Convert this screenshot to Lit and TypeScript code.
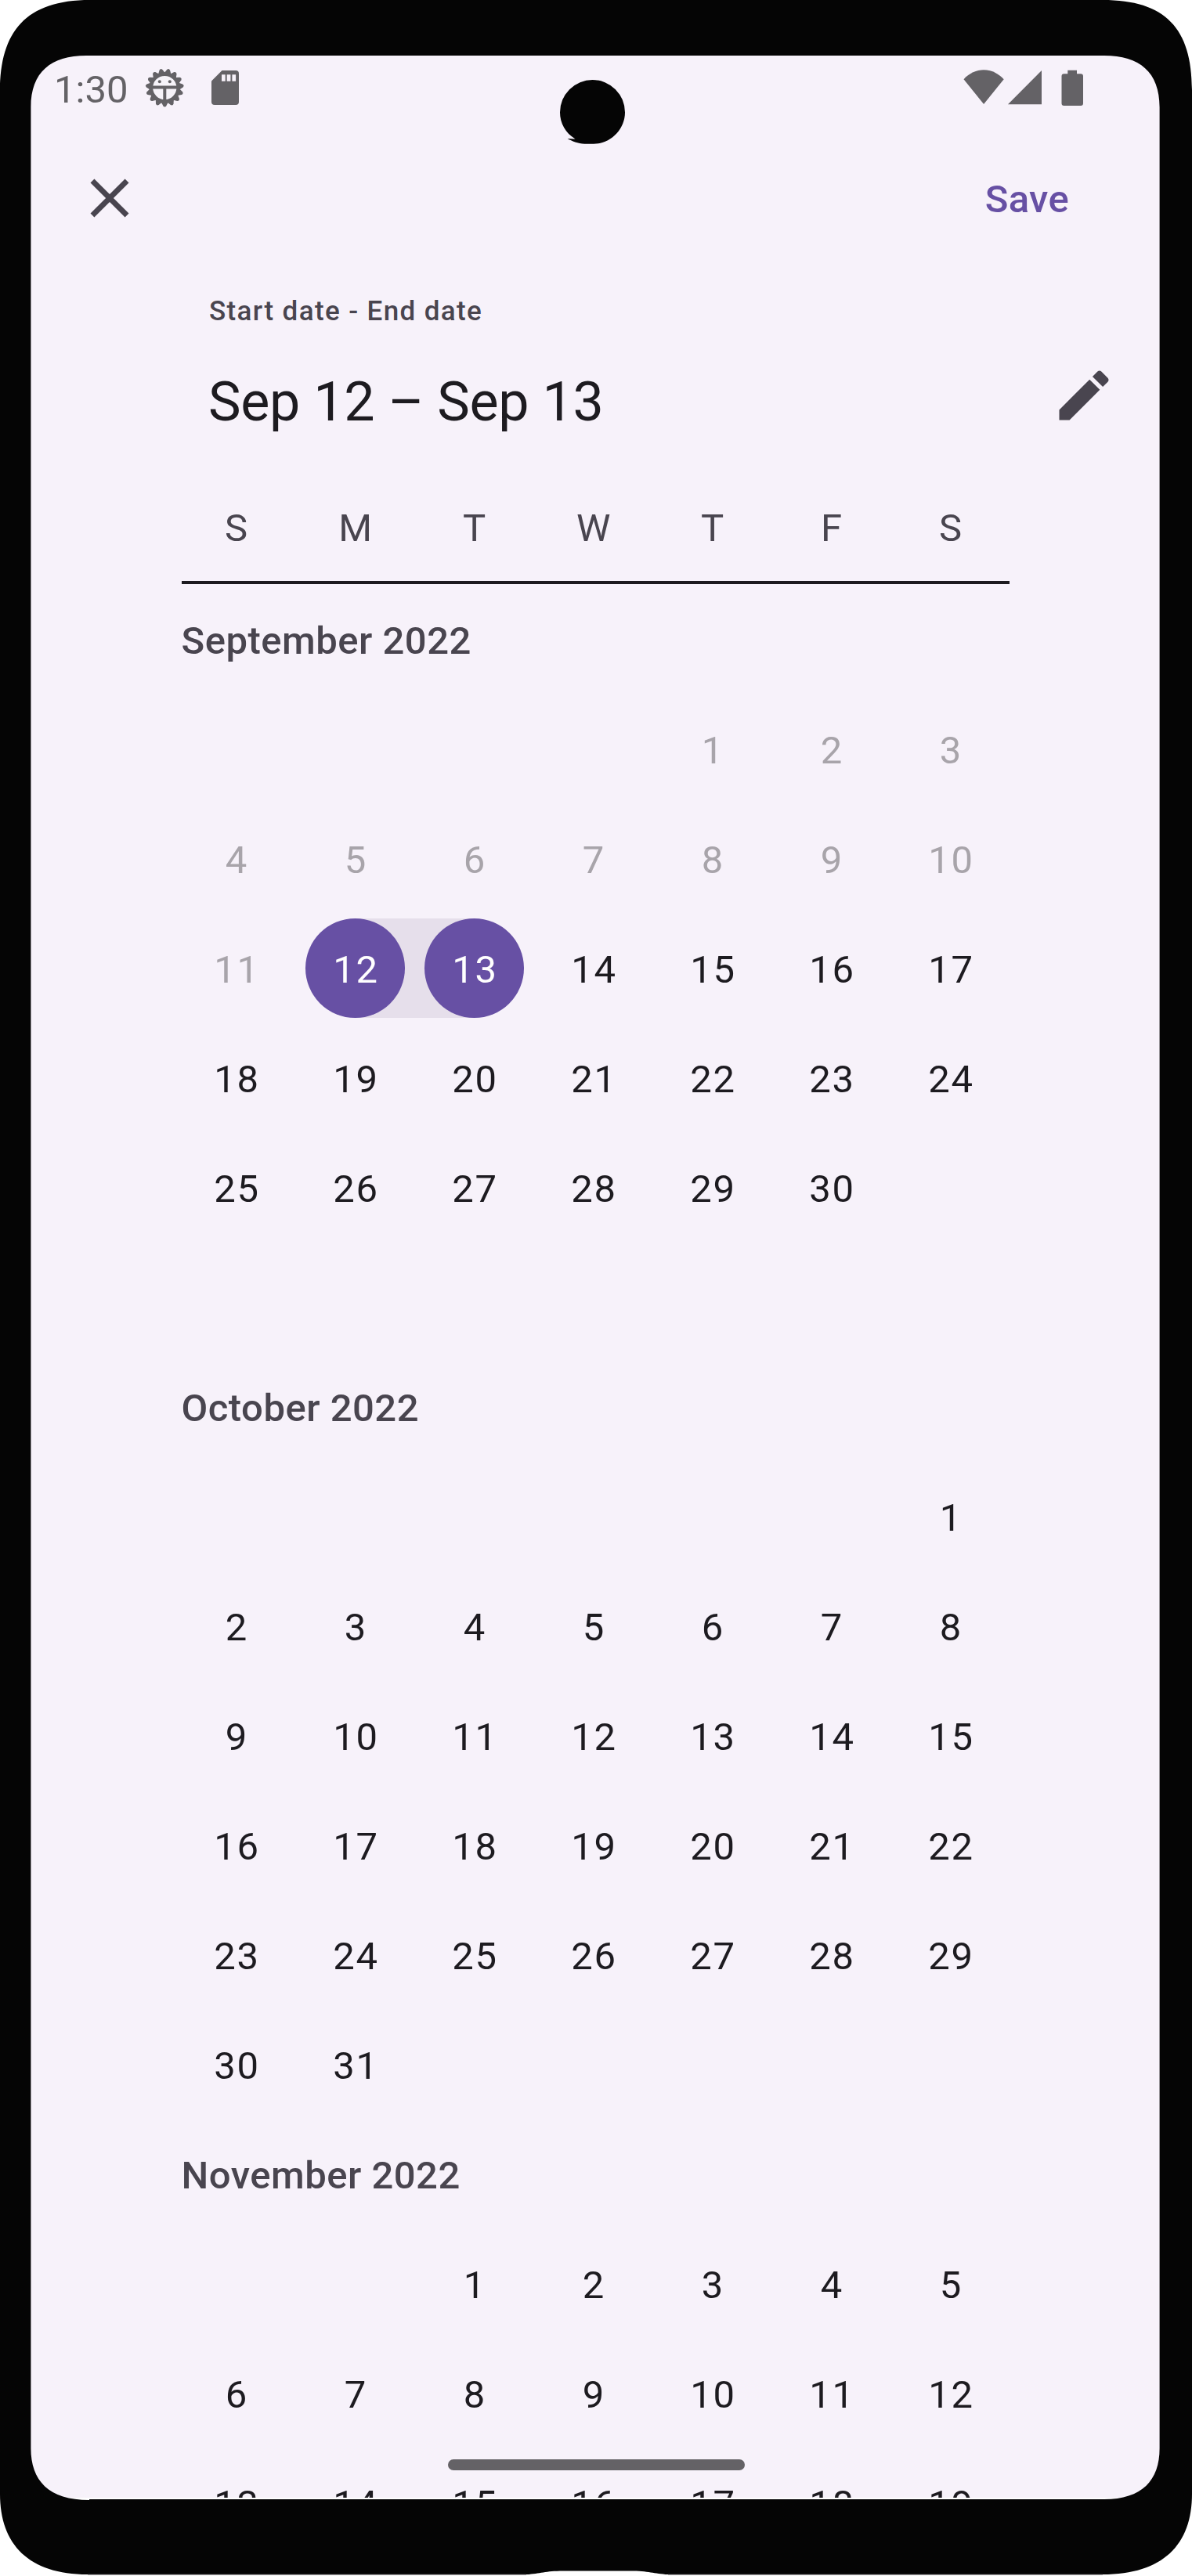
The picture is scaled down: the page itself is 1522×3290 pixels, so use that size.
import { LitElement, html, css, svg, nothing } from "lit";
import { customElement, property } from "lit/decorators.js";
import { classMap } from "lit/directives/class-map.js";

interface Month {
  name: string;
  lead: number;
  days: number;
  weeks: number;
  disabledUntil: number;
  start?: number;
  end?: number;
}

const MONTHS: Month[] = [
  { name: "September 2022", lead: 4, days: 30, weeks: 6, disabledUntil: 11, start: 12, end: 13 },
  { name: "October 2022", lead: 6, days: 31, weeks: 6, disabledUntil: 0 },
  { name: "November 2022", lead: 2, days: 30, weeks: 5, disabledUntil: 0 },
];

const WEEKDAYS = ["S", "M", "T", "W", "T", "F", "S"];

@customElement("calendar-month")
class CalendarMonth extends LitElement {
  @property({ attribute: false }) month!: Month;

  static styles = css`
    :host {
      display: block;
    }
    .title {
      box-sizing: border-box;
      height: 140px;
      padding: 5px 0 0 6px;
      line-height: 135px;
      font-weight: 500;
      letter-spacing: 0.5px;
      color: #49454f;
      white-space: nowrap;
    }
    .week {
      display: grid;
      grid-template-columns: repeat(7, 152px);
      height: 140px;
      align-items: center;
    }
    .day {
      display: flex;
      justify-content: center;
      height: 127px;
      color: #1d1b20;
    }
    .num {
      box-sizing: border-box;
      width: 127px;
      height: 127px;
      padding: 3px 0 0 2px;
      line-height: 125px;
      text-align: center;
      letter-spacing: 1.75px;
    }
    .disabled {
      color: #a8a4aa;
    }
    .start {
      background: linear-gradient(90deg, transparent 50%, #e6dfeb 50%);
    }
    .end {
      background: linear-gradient(90deg, #e6dfeb 50%, transparent 50%);
    }
    .picked .num {
      border-radius: 50%;
      background: #6750a4;
      color: #fff;
    }
  `;

  render() {
    const m = this.month;
    const weeks = Array.from({ length: m.weeks }, (_, w) =>
      Array.from({ length: 7 }, (_, d) => w * 7 + d - m.lead + 1)
    );
    return html`
      <div class="title">${m.name}</div>
      ${weeks.map(
        (week) => html`<div class="week">
          ${week.map((n) => {
            const shown = n > 0 && n <= m.days;
            return html`<div
              class=${classMap({
                day: true,
                disabled: shown && n <= m.disabledUntil,
                start: shown && n === m.start,
                end: shown && n === m.end,
                picked: shown && (n === m.start || n === m.end),
              })}
            >
              ${shown ? html`<span class="num">${n}</span>` : nothing}
            </div>`;
          })}
        </div>`
      )}
    `;
  }
}

@customElement("app-root")
class AppRoot extends LitElement {
  static styles = css`
    :host {
      display: block;
      font-family: Roboto, "Liberation Sans", sans-serif;
      font-size: 49px;
    }
    .phone {
      position: relative;
      box-sizing: border-box;
      width: 1522px;
      height: 3290px;
      padding: 71px 41px 0 39px;
      overflow: hidden;
      background: #fff;
    }
    .screen {
      height: 3119px;
      overflow: hidden;
      background: #f7f2fa;
    }
    svg {
      display: block;
    }
    .bezel {
      position: absolute;
      left: 0;
      top: 0;
    }
    .homebar {
      position: absolute;
      left: 572px;
      top: 3140.7px;
      width: 378.5px;
      height: 14.4px;
      border-radius: 8px;
      background: #646266;
    }
    .status {
      display: flex;
      align-items: center;
      height: 82px;
      padding: 0 98.5px 0 30px;
      color: #646266;
    }
    .time {
      padding-top: 5px;
      width: 116px;
    }
    .grow {
      flex: 1;
    }
    .sd {
      margin-left: 35px;
    }
    .signal {
      margin-left: 5px;
    }
    .battery {
      margin-left: 25px;
    }
    .appbar {
      display: flex;
      align-items: center;
      justify-content: space-between;
      height: 200px;
      padding: 0 116px 0 59.2px;
      color: #49454f;
    }
    .save {
      padding-top: 3px;
      font-weight: 500;
      letter-spacing: 0.35px;
      color: #6750a4;
    }
    .label {
      height: 110px;
      padding-left: 228px;
      line-height: 89px;
      font-size: 35px;
      font-weight: 500;
      letter-spacing: 1.38px;
      color: #49454f;
    }
    .headline {
      display: flex;
      align-items: center;
      justify-content: space-between;
      height: 84px;
      padding: 0 55.5px 0 227px;
      color: #49454f;
    }
    .range {
      padding-top: 16px;
      font-size: 70px;
      line-height: 84px;
      letter-spacing: -0.28px;
      color: #1d1b20;
      white-space: nowrap;
    }
    .weekdays {
      box-sizing: border-box;
      display: grid;
      grid-template-columns: repeat(7, 152px);
      height: 195px;
      padding: 60px 0 0 187.5px;
      line-height: 135px;
      text-align: center;
      letter-spacing: 1.75px;
      color: #49454f;
    }
    .rule {
      height: 4px;
      margin: 0 192px 0 192.5px;
      background: #1d1b20;
    }
    .months {
      padding-left: 186.5px;
    }
  `;

  private gear() {
    const teeth = Array.from({ length: 15 }, (_, i) => {
      return svg`<path
        transform="rotate(${i * 24} 25.3 25)"
        d="M20.9 43.5 23.3 48.2Q25.3 50.6 27.3 48.2L29.7 43.5Z" />`;
    });
    return html`<svg width="50" height="50" viewBox="0 0 50 50">
      <g fill="currentColor">${teeth}</g>
      <circle cx="25.3" cy="25" r="17.4" fill="#f6f3f9" stroke="currentColor" stroke-width="4.6" />
      <path d="M9 24.6H41M25.3 25V41" stroke="currentColor" stroke-width="4" fill="none" />
      <circle cx="18.8" cy="17.3" r="2" fill="currentColor" />
      <circle cx="31.8" cy="17.3" r="2" fill="currentColor" />
    </svg>`;
  }

  private bezel() {
    return html`<svg class="bezel" width="1522" height="3290" viewBox="0 0 1522 3290">
      <path
        fill="#050505"
        fill-rule="evenodd"
        d="M0 117C0 40 33 0 115 0H1408C1488 0 1522 36 1522 115V3185C1522 3250 1485 3288 1408 3288H853C835 3287 828 3283.4 805 3283.4H719C696 3283.4 690 3287 672 3288H112C37 3288 0 3250 0 3185Z
        M39.4 137V3127C39.4 3168 62 3193 114 3193V3192H1410C1458 3192 1480.6 3168 1480.6 3127V137C1480.6 92 1455 71 1410 71H110C65 71 39.4 92 39.4 137Z"
      />
      <path
        fill="#050505"
        d="M756.5 102A41.5 41.5 0 0 1 798 143.5C798 165 780 183.7 758 183.7H746.5C738 183.5 730 180 724.6 177C728 177.3 731 177.5 734.5 177.4C722 170 715 157 715 143.5A41.5 41.5 0 0 1 756.5 102Z"
      />
      <path d="M112 3288.3H672M853 3288.3H1408" stroke="#8f8c8f" stroke-width="1" />
    </svg>`;
  }

  render() {
    return html`
      <div class="phone">
        <div class="screen">
          <div class="status">
            <span class="time">1:30</span>
            ${this.gear()}
            <svg class="sd" width="35" height="44" viewBox="0 0 35 44">
              <path fill="currentColor" d="M13.5 0H31a4 4 0 0 1 4 4V40a4 4 0 0 1-4 4H4a4 4 0 0 1-4-4V13.5Z" />
              <path fill="#f7f2fa" d="M13 5.3h4.7v8.4H13zM19.7 5.3h4.7v8.4h-4.7zM26.4 5.3h4.7v8.4h-4.7z" />
            </svg>
            <span class="grow"></span>
            <svg width="52" height="46" viewBox="0 0 52 46">
              <path fill="currentColor" d="M.5 12.2C15-3.6 37-3.6 51.7 12.2L26.1 44Z" />
            </svg>
            <svg class="signal" width="43" height="46" viewBox="0 0 43 46">
              <path fill="currentColor" d="M0 44.3 43 1V44.3Z" />
            </svg>
            <svg class="battery" width="28" height="46" viewBox="0 0 28 46">
              <path
                fill="currentColor"
                d="M8.3.7H20V5.3H25a3 3 0 0 1 3 3V43a3 3 0 0 1-3 3H3.5a3 3 0 0 1-3-3V8.3a3 3 0 0 1 3-3H8.3Z"
              />
            </svg>
          </div>

          <div class="appbar">
            <svg width="84" height="84" viewBox="0 0 24 24">
              <path
                fill="currentColor"
                d="M19 6.41 17.59 5 12 10.59 6.41 5 5 6.41 10.59 12 5 17.59 6.41 19 12 13.41 17.59 19 19 17.59 13.41 12z"
              />
            </svg>
            <span class="save">Save</span>
          </div>

          <div class="label">Start date - End date</div>
          <div class="headline">
            <span class="range">Sep 12 – Sep 13</span>
            <svg width="84" height="84" viewBox="0 0 24 24">
              <path
                fill="currentColor"
                d="M3 17.25V21h3.75L17.81 9.94l-3.75-3.75L3 17.25zM20.71 7.04c.39-.39.39-1.02 0-1.41l-2.34-2.34c-.39-.39-1.02-.39-1.41 0l-1.83 1.83 3.75 3.75 1.83-1.83z"
              />
            </svg>
          </div>

          <div class="weekdays">${WEEKDAYS.map((d) => html`<span>${d}</span>`)}</div>
          <div class="rule"></div>
          <div class="months">
            ${MONTHS.map((m) => html`<calendar-month .month=${m}></calendar-month>`)}
          </div>
        </div>
        ${this.bezel()}
        <div class="homebar"></div>
      </div>
    `;
  }
}
